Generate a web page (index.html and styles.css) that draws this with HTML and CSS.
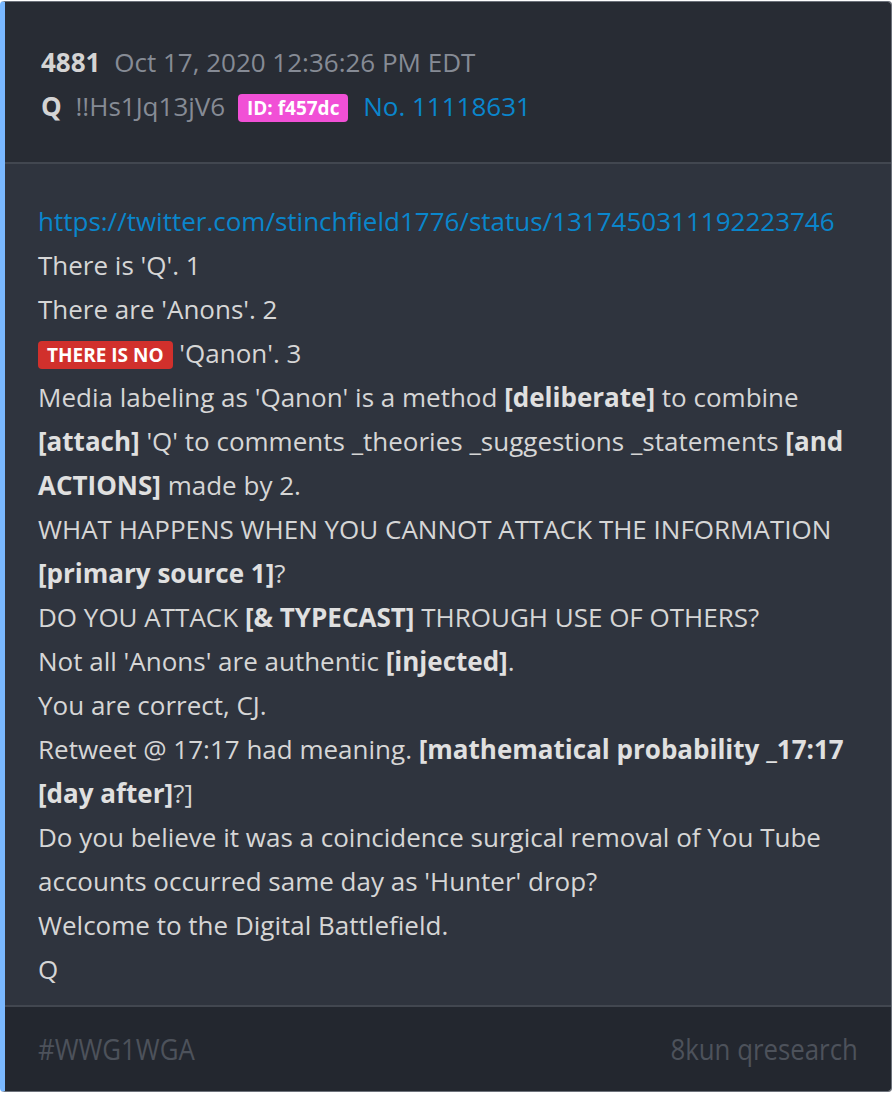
FILE: index.html
```html
<!DOCTYPE html>
<html lang="en">
<head>
  <meta charset="UTF-8">
  <meta name="viewport" content="width=device-width, initial-scale=1.0">
  <title>Q drop 4881</title>
  <link rel="stylesheet" href="styles.css">
</head>
<body>

  <div class="post">
    <div class="post-header">
      <p><span class="num">4881</span> <span class="meta">Oct 17, 2020 12:36:26 PM EDT</span></p>
      <p>
        <span class="name">Q</span> <span class="meta">!!Hs1Jq13jV6</span>
        <span class="badge badge-id">ID: f457dc</span>
        <a class="link" href="#">No. 11118631</a>
      </p>
    </div>

    <div class="post-body">
      <p><a class="link" href="#">https://twitter.com/stinchfield1776/status/1317450311192223746</a></p>
      <p>There is 'Q'. 1</p>
      <p>There are 'Anons'. 2</p>
      <p><span class="badge badge-no">THERE IS NO</span> 'Qanon'. 3</p>
      <p>Media labeling as 'Qanon' is a method <strong>[deliberate]</strong> to combine <strong>[attach]</strong> 'Q' to comments _theories _suggestions _statements <strong>[and ACTIONS]</strong> made by 2.</p>
      <p>WHAT HAPPENS WHEN YOU CANNOT ATTACK THE INFORMATION <strong>[primary source 1]</strong>?</p>
      <p>DO YOU ATTACK <strong>[&amp; TYPECAST]</strong> THROUGH USE OF OTHERS?</p>
      <p>Not all 'Anons' are authentic <strong>[injected]</strong>.</p>
      <p>You are correct, CJ.</p>
      <p>Retweet @ 17:17 had meaning. <strong>[mathematical probability _17:17 [day after]</strong>?]</p>
      <p>Do you believe it was a coincidence surgical removal of You Tube accounts occurred same day as 'Hunter' drop?</p>
      <p>Welcome to the Digital Battlefield.</p>
      <p>Q</p>
    </div>

    <div class="post-footer">
      <span class="tag">#WWG1WGA</span>
      <span class="tag">8kun qresearch</span>
    </div>
  </div>

</body>
</html>
```

FILE: styles.css
```css
* { box-sizing: border-box; margin: 0; padding: 0; }
body {
  font-family: "Open Sans", "Noto Sans", sans-serif;
  background: #ffffff;
  padding: 1px 2px 2px 0;
}
.post {
  border: 1px solid #6c717a;
  border-left: 5px solid #7ab8ff;
  border-radius: 4px;
  overflow: hidden;
  font-size: 26px;
  line-height: 44px;
}
.post-header {
  background: #282c34;
  padding: 38px 30px 34px 36px;
  border-bottom: 2px solid #424750;
}
.num, .name { color: #d4d4d4; font-weight: bold; }
.num { margin-right: 7px; }
.name { margin-right: 7px; }
.meta { color: #868b95; }
.link { color: #0a86cc; text-decoration: none; }
.badge {
  display: inline-block;
  color: #fff;
  font-weight: bold;
  font-size: 19px;
  line-height: 28px;
  padding: 0 9px;
  border-radius: 4px;
  vertical-align: 1px;
}
.badge-id { background: #f150d6; margin: 0 8px 0 6px; }
.badge-no { background: #d1302c; }
.post-body {
  background: #2f343e;
  color: #d6d6d6;
  padding: 35px 30px 14px 33px;
  border-bottom: 2px solid #424750;
}
.post-body strong { color: #e0e0e0; }
.post-footer {
  background: #23272f;
  height: 84px;
  padding: 0 33px;
  display: flex;
  justify-content: space-between;
  align-items: center;
}
.tag {
  display: inline-block;
  color: #4d525b;
  font-size: 30px;
  transform: scaleX(0.86);
}
.tag:first-child { transform-origin: left center; }
.tag:last-child { transform-origin: right center; }
```
